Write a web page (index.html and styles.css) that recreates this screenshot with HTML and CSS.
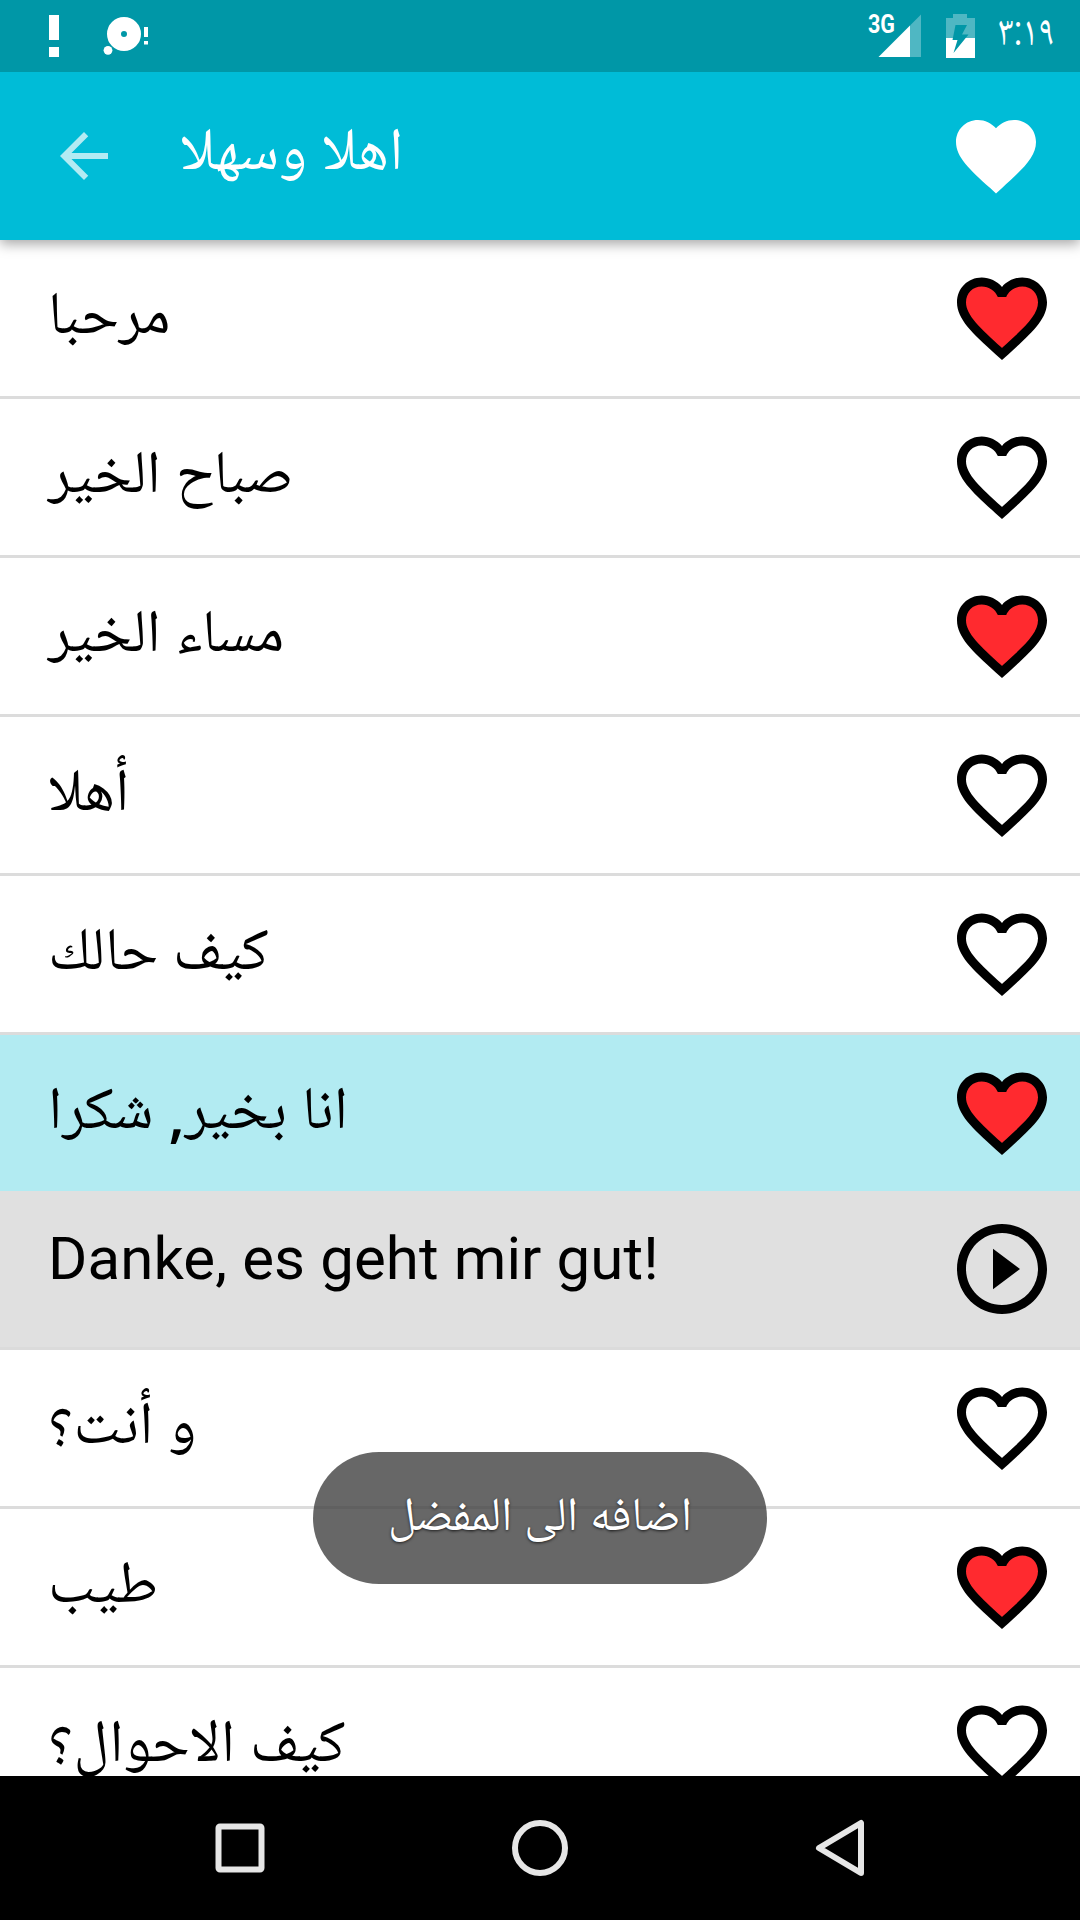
FILE: index.html
```html
<!DOCTYPE html>
<html lang="ar">
<head>
    <meta charset="UTF-8">
    <meta name="viewport" content="width=device-width, initial-scale=1.0">
    <title>اهلا وسهلا</title>
    <link rel="stylesheet" href="styles.css">
</head>
<body>
    <!-- Icons -->
    <svg class="defs">
        <symbol id="heart" viewBox="0 0 24 24">
            <path d="M12 21.35l-1.45-1.32C5.4 15.36 2 12.28 2 8.5 2 5.42 4.42 3 7.5 3c1.74 0 3.41.81 4.5 2.09C13.09 3.81 14.76 3 16.5 3 19.58 3 22 5.42 22 8.5c0 3.78-3.4 6.86-8.55 11.54L12 21.35z"/>
        </symbol>
        <symbol id="heart-border" viewBox="0 0 24 24">
            <path d="M16.5 3c-1.74 0-3.41.81-4.5 2.09C10.91 3.81 9.24 3 7.5 3 4.42 3 2 5.42 2 8.5c0 3.78 3.4 6.86 8.55 11.54L12 21.35l1.45-1.32C18.6 15.36 22 12.28 22 8.5 22 5.42 19.58 3 16.5 3zm-4.4 15.55l-.1.1-.1-.1C7.14 14.24 4 11.39 4 8.5 4 6.5 5.5 5 7.5 5c1.54 0 3.04.99 3.57 2.36h1.87C13.46 5.99 14.96 5 16.5 5c2 0 3.5 1.5 3.5 3.5 0 2.89-3.14 5.74-7.9 10.05z"/>
        </symbol>
        <symbol id="heart-red" viewBox="0 0 24 24">
            <path class="red" d="M12 20C6 15 3 12 3 8.5 3 6 5 4 7.5 4c1.8 0 3.5 1 4.5 2.6C13 5 14.7 4 16.5 4 19 4 21 6 21 8.5 21 12 18 15 12 20z"/>
            <use href="#heart-border"/>
        </symbol>
        <symbol id="play" viewBox="0 0 24 24">
            <path d="M10 16.5l6-4.5-6-4.5v9zM12 2C6.48 2 2 6.48 2 12s4.48 10 10 10 10-4.48 10-10S17.52 2 12 2zm0 18c-4.41 0-8-3.59-8-8s3.59-8 8-8 8 3.59 8 8-3.59 8-8 8z"/>
        </symbol>
    </svg>

    <div class="status-bar">
        <svg class="notifications" width="110" height="72" viewBox="45 0 110 72">
            <path d="M49 15h10v25H49zM49 47h10v10H49zM144 27h4v10h-4zM144 41h4v3.5h-4z"/>
            <circle cx="108" cy="50.3" r="4.4"/>
            <circle cx="124" cy="34" r="10" class="disc"/>
        </svg>
        <svg class="signals" width="112" height="72" viewBox="866 0 112 72">
            <path class="faded" d="M910 25.5L921 14.5V57h-11z"/>
            <path d="M878.5 57L910 25.5V57z"/>
            <text x="868" y="33.3" textLength="27" lengthAdjust="spacingAndGlyphs">3G</text>
            <path class="faded" d="M946 18h7v-4h14v4h8v20h-29z"/>
            <path d="M946 38h29v20h-29z"/>
            <path class="bolt" d="M955.5 25H967l-5 9.5h6.5L953.5 53l4-13h-5z"/>
        </svg>
        <svg class="time" width="76" height="72" viewBox="0 0 76 72">
            <text x="20" y="45" textLength="56" lengthAdjust="spacingAndGlyphs">٣:١٩</text>
        </svg>
    </div>

    <header class="toolbar">
        <svg class="back" viewBox="0 0 24 24"><path d="M20 11H7.83l5.59-5.59L12 4l-8 8 8 8 1.41-1.41L7.83 13H20v-2z"/></svg>
        <h1>اهلا وسهلا</h1>
        <svg class="fav"><use href="#heart"/></svg>
    </header>

    <main class="list">
        <div class="row"><span>مرحبا</span><svg><use href="#heart-red"/></svg></div>
        <div class="row"><span>صباح الخير</span><svg><use href="#heart-border"/></svg></div>
        <div class="row"><span>مساء الخير</span><svg><use href="#heart-red"/></svg></div>
        <div class="row"><span>أهلا</span><svg><use href="#heart-border"/></svg></div>
        <div class="row"><span>كيف حالك</span><svg><use href="#heart-border"/></svg></div>
        <div class="row selected"><span dir="rtl">انا بخير<b>,</b> شكرا</span><svg><use href="#heart-red"/></svg></div>
        <div class="row translation"><span>Danke, es geht mir gut!</span><svg><use href="#play"/></svg></div>
        <div class="row"><span dir="rtl">و أنت؟</span><svg><use href="#heart-border"/></svg></div>
        <div class="row"><span>طيب</span><svg><use href="#heart-red"/></svg></div>
        <div class="row"><span dir="rtl">كيف الاحوال؟</span><svg><use href="#heart-border"/></svg></div>
    </main>

    <div class="toast">اضافه الى المفضل</div>

    <nav class="nav-bar">
        <svg viewBox="0 0 60 60"><rect x="8.5" y="8.5" width="43" height="43" rx="1.5"/></svg>
        <svg viewBox="0 0 60 60"><circle cx="30" cy="30" r="25"/></svg>
        <svg viewBox="0 0 60 60"><path d="M51 5v50L9 30z"/></svg>
    </nav>
</body>
</html>
```

FILE: styles.css
```css
* {
    box-sizing: border-box;
}
body {
    margin: 0;
    height: 1920px;
    display: flex;
    flex-direction: column;
    position: relative;
    overflow: hidden;
    background-color: #fff;
    font-family: Roboto, "Noto Naskh Arabic", sans-serif;
}
.defs {
    position: absolute;
    width: 0;
    height: 0;
}

/* Status bar */
.status-bar {
    flex: none;
    height: 72px;
    padding: 0 26px 0 45px;
    display: flex;
    background-color: #0097a7;
    color: #fff;
    fill: #fff;
}
.notifications {
    margin-right: auto;
}
.disc {
    fill: none;
    stroke: #fff;
    stroke-width: 14px;
}
.faded {
    fill: #4fb7c3;
}
.bolt {
    fill: #0097a7;
}
.signals text {
    font: bold 25px Roboto, sans-serif;
}
.time {
    overflow: visible;
}
.time text {
    font-size: 42px;
}

/* Toolbar */
.toolbar {
    flex: none;
    height: 168px;
    padding: 0 36px 0 48px;
    display: flex;
    align-items: center;
    background-color: #00bcd7;
    color: #fff;
    fill: #fff;
    box-shadow: 0 4px 12px rgba(0, 0, 0, 0.35);
    clip-path: inset(0 0 -30px 0);
    z-index: 1;
}
.back {
    width: 72px;
    height: 72px;
    opacity: 0.7;
}
.toolbar h1 {
    flex: 1;
    margin: 0 0 15px 60px;
    font-size: 60px;
    font-weight: normal;
    line-height: 100px;
}
.fav {
    width: 96px;
    height: 96px;
}

/* Phrase list */
.list {
    flex: 1;
    min-height: 0;
    overflow: hidden;
}
.row {
    height: 159px;
    padding: 0 24px 0 48px;
    display: flex;
    align-items: center;
    justify-content: space-between;
    border-bottom: 3px solid #dcdcdc;
    font-size: 60px;
    line-height: 100px;
    color: #000;
}
.row span {
    margin-bottom: 10px;
}
.row b {
    font-family: "Open Sans", "Noto Sans", sans-serif;
    font-weight: 600;
    line-height: 0;
    vertical-align: -8px;
}
.row svg {
    width: 108px;
    height: 108px;
}
.row.selected {
    height: 156px;
    border-bottom: none;
    background-color: #b2ebf2;
}
.row.translation {
    background-color: #e0e0e0;
    border-bottom-color: #dbdbdb;
}
.row.translation span {
    margin-bottom: 21px;
    letter-spacing: 0.1px;
}
.red {
    fill: #ff2a2f;
}

/* Toast */
.toast {
    position: absolute;
    left: 313px;
    top: 1452px;
    width: 454px;
    height: 132px;
    border-radius: 66px;
    background-color: rgba(65, 65, 65, 0.8);
    color: #fff;
    font-size: 47.5px;
    line-height: 124px;
    text-align: center;
    text-shadow: 0 1px 3px rgba(0, 0, 0, 0.7);
    z-index: 2;
}

/* Navigation bar */
.nav-bar {
    flex: none;
    height: 144px;
    padding: 0 210px;
    display: flex;
    align-items: center;
    justify-content: space-between;
    background-color: #000;
}
.nav-bar svg {
    width: 60px;
    height: 60px;
    fill: none;
    stroke: #e6e6e6;
    stroke-width: 6px;
    stroke-linejoin: round;
}
```
